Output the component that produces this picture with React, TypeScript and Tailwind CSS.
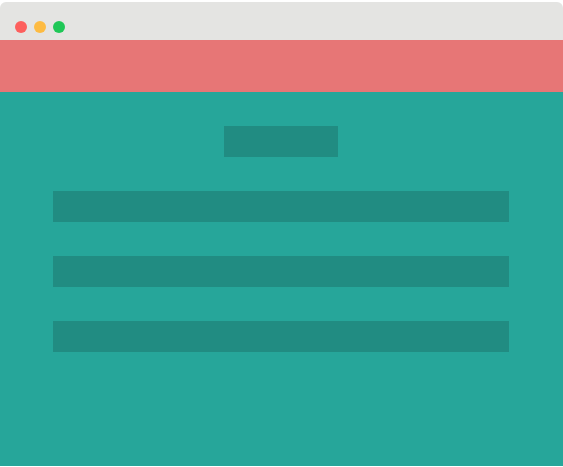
export default function App() {
  return (
    <div className="w-[563px] h-[467px] bg-white pt-[2px] pb-px flex flex-col">
      <div className="flex-1 flex flex-col rounded-t-[6px] overflow-hidden">
        {/* title bar */}
        <div className="h-[38px] bg-[#e4e4e2] flex items-start pt-[19px] pl-[15px] gap-[7px]">
          <span className="w-[12px] h-[12px] rounded-full bg-[#fd5f5d]" />
          <span className="w-[12px] h-[12px] rounded-full bg-[#fdbb42]" />
          <span className="w-[12px] h-[12px] rounded-full bg-[#1fc757]" />
        </div>
        {/* header strip */}
        <div className="h-[52px] bg-[#e77676]" />
        {/* content */}
        <div className="flex-1 bg-[#26a69a] flex flex-col items-start pt-[34px] pl-[53px] gap-[34px]">
          <div className="ml-[171px] w-[114px] h-[31px] bg-[#218c82]" />
          <div className="w-[456px] h-[31px] bg-[#218c82]" />
          <div className="w-[456px] h-[31px] bg-[#218c82]" />
          <div className="w-[456px] h-[31px] bg-[#218c82]" />
        </div>
      </div>
    </div>
  );
}
